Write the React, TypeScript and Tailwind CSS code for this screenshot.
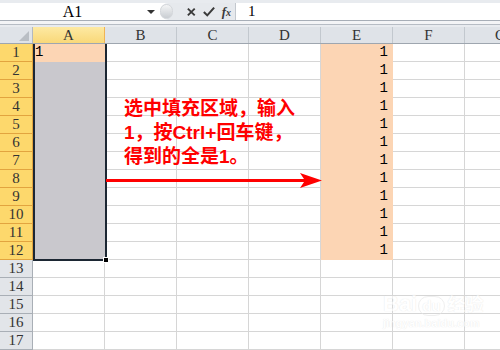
import React from 'react';

const rowNumbers = Array.from({ length: 17 }, (_, i) => i + 1);
const columns = ['A', 'B', 'C', 'D', 'E', 'F', 'G'];
const sheetFont = { fontFamily: '"Liberation Serif", "DejaVu Serif", serif' };
const cellFont = { fontFamily: '"Liberation Mono", "DejaVu Sans Mono", monospace' };

function FormulaBar() {
  return (
    <div className="h-[27px] flex flex-col bg-[#e8ebef]">
      <div className="h-[3px]" />
      <div className="h-[18px] flex bg-white border-b border-[#a7aeb7]">
        <div className="w-[145px] flex items-center justify-center text-[16px] text-black" style={sheetFont}>A1</div>
        <div className="w-[15px] flex items-center justify-start pl-[2px]">
          <div className="w-0 h-0 border-x-[4px] border-x-transparent border-t-[4px] border-t-[#333]" />
        </div>
        <div className="w-[76px] flex items-center gap-[7px] rounded-l-full bg-[#e6e9ed] border-r border-[#c3c8ce] pr-[4px]">
          <div className="w-[15px] h-[15px] rounded-full bg-gradient-to-b from-[#f4f5f6] to-[#c9cdd2] border border-[#d4d7db]" />
          <svg width="10" height="10" viewBox="0 0 10 10" className="ml-[7px]">
            <path d="M1 1 L9 9 M9 1 L1 9" stroke="#3a3a3a" strokeWidth="2.2" />
          </svg>
          <svg width="14" height="11" viewBox="0 0 14 11">
            <path d="M1 6 L5 10 L13 1" stroke="#3a3a3a" strokeWidth="2.4" fill="none" />
          </svg>
          <span className="italic font-bold text-[13px] leading-none text-[#3a3a3a]" style={{ fontFamily: '"Liberation Serif", serif' }}>f<span className="text-[10px]">x</span></span>
        </div>
        <div className="flex-1 flex items-center pl-[12px] text-[15px]" style={sheetFont}>1</div>
      </div>
      <div className="h-[4px] bg-[#f3f4f6] border-b border-[#b6bcc4]" />
      <div className="h-[1px]" />
    </div>
  );
}

function ColumnHeader() {
  return (
    <div className="h-[17px] flex bg-[#dfe3e8] border-b border-[#9ea6af]">
      <div className="w-[33px] shrink-0 border-r border-[#b3b9c0] relative">
        <div className="absolute right-[3px] bottom-[2px] w-0 h-0 border-l-[10px] border-l-transparent border-b-[10px] border-b-[#b9bec4]" />
      </div>
      {columns.map((c) => (
        <div
          key={c}
          className={
            c === 'A'
              ? 'w-[72px] shrink-0 flex items-center justify-center text-[15px] text-[#333] bg-gradient-to-b from-[#fde9a2] to-[#f9d878] border-r border-[#f0b454]'
              : 'w-[72px] shrink-0 flex items-center justify-center text-[15px] text-[#333] border-r border-[#c2c8ce]'
          }
          style={sheetFont}
        >
          {c}
        </div>
      ))}
    </div>
  );
}

function GridRow({ row }: { row: number }) {
  const selected = row <= 12;
  return (
    <div className="h-[18px] flex">
      <div
        className={
          selected
            ? 'w-[33px] shrink-0 flex items-center justify-center text-[15px] text-[#333] bg-[#fdd86c] border-r border-b border-[#e2a43f]'
            : 'w-[33px] shrink-0 flex items-center justify-center text-[15px] text-[#333] bg-[#e2e5e9] border-r border-b border-[#a9afb6]'
        }
        style={sheetFont}
      >
        {row}
      </div>
      {columns.map((c) => {
        let cls = 'w-[72px] shrink-0 border-r border-b border-[#d6d6d6] flex items-center text-[14px] text-black';
        let text = '';
        if (c === 'A' && row === 1) {
          cls = 'w-[72px] shrink-0 border-r border-b border-[#fcd5b4] bg-[#fcd5b4] pl-[2px] flex items-center text-[14px] text-black';
          text = '1';
        } else if (c === 'A' && selected) {
          cls = 'w-[72px] shrink-0 border-r border-b border-[#c9c8cd] bg-[#c9c8cd]';
        } else if (c === 'E' && selected) {
          cls = 'w-[72px] shrink-0 border-r border-b border-[#fcd5b4] bg-[#fcd5b4] flex items-center justify-end pr-[4px] text-[14px] text-black';
          text = '1';
        }
        return (
          <div key={c} className={cls} style={cellFont}>
            {text}
          </div>
        );
      })}
    </div>
  );
}

export default function App() {
  return (
    <div className="w-[500px] h-[350px] overflow-hidden bg-white relative">
      <FormulaBar />
      <ColumnHeader />
      {rowNumbers.map((r) => (
        <GridRow key={r} row={r} />
      ))}

      {/* selection range A1:A12 */}
      <div className="absolute left-[33px] top-[44px] w-[74px] h-[217px] border-l-2 border-r-2 border-b-2 border-[#1c2733]" />
      <div className="absolute left-[103px] top-[257px] w-[6px] h-[6px] bg-black border border-white" />

      {/* annotation */}
      <div
        className="absolute left-[124px] top-[97px] text-[19px] leading-[24px] font-bold text-[#ff0000] whitespace-nowrap"
        style={{ fontFamily: '"Liberation Sans", "Noto Sans CJK SC", sans-serif' }}
      >
        <div>选中填充区域，输入</div>
        <div>1，按Ctrl+回车键，</div>
        <div>得到的全是1。</div>
      </div>
      <svg className="absolute left-[106px] top-[172px]" width="220" height="18" viewBox="0 0 220 18">
        <rect x="0" y="7" width="200" height="3" fill="#ff0000" />
        <path d="M194 1 L216 8.5 L194 16 L199 8.5 Z" fill="#ff0000" />
      </svg>

      {/* watermark */}
      <div className="absolute left-[383px] top-[292px] text-white opacity-60 [text-shadow:0_0_1px_#d0d0d0]">
        <div className="flex items-end gap-[1px] font-bold" style={{ fontFamily: '"Liberation Sans", "Noto Sans CJK SC", sans-serif' }}>
          <span className="text-[22px] leading-[24px]">Bai</span>
          <span className="text-[15px] leading-[18px] px-[3px] rounded-full border border-[#e6e6e6]">du</span>
          <span className="text-[18px] leading-[22px] ml-[2px]">经验</span>
        </div>
        <div className="text-[11px] leading-[12px] font-bold mt-[1px]" style={{ fontFamily: '"Liberation Sans", sans-serif' }}>jingyan.baidu.com</div>
      </div>
    </div>
  );
}
